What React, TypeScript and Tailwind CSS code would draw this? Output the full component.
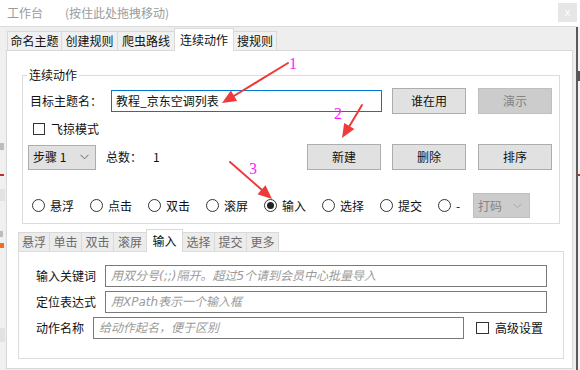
import React from "react";

function Chevron({ color = "#555" }: { color?: string }) {
  return (
    <svg width="9" height="6" viewBox="0 0 9 6" className="shrink-0">
      <polyline points="0.5,0.8 4.5,4.8 8.5,0.8" fill="none" stroke={color} strokeWidth="1" />
    </svg>
  );
}

function Btn({ label, disabled, className = "" }: { label: string; disabled?: boolean; className?: string }) {
  return (
    <div
      className={
        "w-[74px] h-[26px] flex items-center justify-center border " +
        (disabled ? "bg-[#cccccc] border-[#bfbfbf] text-[#838383] " : "bg-[#e1e1e1] border-[#adadad] text-[#111] ") +
        className
      }
    >
      {label}
    </div>
  );
}

function Radio({ label, checked, w = "w-[58px]" }: { label: string; checked?: boolean; w?: string }) {
  return (
    <div className={"flex items-center shrink-0 " + w}>
      <div className="w-[13px] h-[13px] rounded-full border border-[#333] bg-white flex items-center justify-center">
        {checked ? <div className="w-[7px] h-[7px] rounded-full bg-[#222]" /> : null}
      </div>
      <span className="ml-[5px]">{label}</span>
    </div>
  );
}

function Tab({ label, w, active, gray }: { label: string; w: string; active?: boolean; gray?: boolean }) {
  if (active) {
    return (
      <div
        className={
          "relative z-10 -mb-px h-[23px] bg-white border border-b-0 border-[#d9d9d9] flex items-center justify-center text-[#111] -ml-px " +
          w
        }
      >
        {label}
      </div>
    );
  }
  return (
    <div
      className={
        "h-[19px] border border-b-0 border-[#d9d9d9] flex items-center justify-center -ml-px first:ml-0 " +
        (gray ? "bg-[#ececec] text-[#6a6a6a] " : "bg-[#f0f0f0] text-[#111] ") +
        w
      }
    >
      {label}
    </div>
  );
}

const ph =
  "flex items-center pl-[5px] italic text-[#9b9b9b] font-['DejaVu_Sans','Noto_Sans_CJK_SC',sans-serif] text-[12px]";

export default function App() {
  return (
    <div className="w-[580px] h-[370px] overflow-hidden bg-white relative font-['Noto_Sans_CJK_SC','Microsoft_YaHei',sans-serif] text-[12px] leading-[16px] text-[#111]">
      {/* title bar */}
      <div className="h-[27px] w-[577px] flex items-center border-b border-[#dadada] bg-white">
        <span className="ml-[7px] text-[#9a9a9a]">工作台</span>
        <span className="ml-[22px] text-[#9a9a9a]">(按住此处拖拽移动)</span>
        <div className="ml-auto mb-[2px] w-[19px] h-[19px] bg-[#e6e6e6] flex items-center justify-center text-white text-[11px] font-['Liberation_Sans',sans-serif]">
          x
        </div>
      </div>

      <div className="flex h-[343px]">
        {/* left background strip */}
        <div className="w-[5px] bg-[#f0f0f0] flex flex-col">
          <div className="mt-[116px] w-[4px] h-[7px] bg-[#9a9a9a] opacity-60" />
          <div className="mt-[24px] w-[4px] h-[2px] bg-[#c0302a]" />
          <div className="mt-[13px] w-[5px] h-[12px] bg-[#e2e2e2]" />
          <div className="mt-[30px] w-[3px] h-[6px] bg-[#888] opacity-50" />
          <div className="mt-[6px] w-[4px] h-[5px] bg-[#f07020]" />
          <div className="mt-[80px] w-[5px] h-[14px] bg-[#e2e2e2]" />
        </div>

        {/* main window body */}
        <div className="w-[571px] bg-[#eeeeee] flex flex-col">
          {/* top tabs */}
          <div className="h-[23px] flex items-end ml-[2px]">
            <Tab label="命名主题" w="w-[55px]" />
            <Tab label="创建规则" w="w-[57px]" />
            <Tab label="爬虫路线" w="w-[58px]" />
            <Tab label="连续动作" w="w-[60px]" active />
            <Tab label="搜规则" w="w-[44px]" />
          </div>

          {/* panel */}
          <div className="ml-[1px] w-[567px] h-[319px] bg-white border border-[#d9d9d9] flex flex-col">
            <fieldset className="ml-[15px] mt-[16px] w-[538px] border border-[#dcdcdc] p-0 m-0">
              <legend className="ml-[4px] px-[2px] leading-[16px]">连续动作</legend>
              <div className="flex flex-col pt-[5px] pb-[5px] pr-[7px]">
                {/* row 1 */}
                <div className="flex items-center h-[26px] pl-[7px]">
                  <span className="w-[81px]">目标主题名：</span>
                  <div className="w-[271px] h-[22px] border border-[#0078d7] flex items-center pl-[4px]">
                    教程_京东空调列表
                  </div>
                  <Btn label="谁在用" className="ml-[10px]" />
                  <Btn label="演示" disabled className="ml-[12px]" />
                </div>
                {/* row 2 */}
                <div className="flex items-center h-[16px] mt-[7px] pl-[10px]">
                  <div className="w-[12px] h-[12px] border border-[#333] bg-white" />
                  <span className="ml-[6px]">飞掠模式</span>
                </div>
                {/* row 3 */}
                <div className="flex items-center h-[26px] mt-[7px] pl-[5px]">
                  <div className="w-[68px] h-[25px] bg-[#e1e1e1] border border-[#adadad] flex items-center pl-[4px] pr-[6px]">
                    <span>步骤 1</span>
                    <div className="ml-auto">
                      <Chevron color="#666" />
                    </div>
                  </div>
                  <span className="ml-[10px]">总数：</span>
                  <span className="ml-[11px]">1</span>
                  <Btn label="新建" className="ml-auto" />
                  <Btn label="删除" className="ml-[11px]" />
                  <Btn label="排序" className="ml-[12px]" />
                </div>
                {/* row 4 */}
                <div className="flex items-center h-[25px] mt-[23px] pl-[9px]">
                  <Radio label="悬浮" />
                  <Radio label="点击" />
                  <Radio label="双击" />
                  <Radio label="滚屏" />
                  <Radio label="输入" checked />
                  <Radio label="选择" />
                  <Radio label="提交" />
                  <Radio label="-" w="w-[35px]" />
                  <div className="w-[57px] h-[25px] bg-[#cccccc] border border-[#bfbfbf] flex items-center pl-[4px] pr-[7px] text-[#858585]">
                    <span>打码</span>
                    <div className="ml-auto">
                      <Chevron color="#a8a8a8" />
                    </div>
                  </div>
                </div>
              </div>
            </fieldset>

            {/* sub tabs */}
            <div className="ml-[11px] mt-[4px] h-[23px] flex items-end">
              <Tab label="悬浮" w="w-[32px]" gray />
              <Tab label="单击" w="w-[33px]" gray />
              <Tab label="双击" w="w-[33px]" gray />
              <Tab label="滚屏" w="w-[34px]" gray />
              <Tab label="输入" w="w-[37px]" active />
              <Tab label="选择" w="w-[33px]" gray />
              <Tab label="提交" w="w-[33px]" gray />
              <Tab label="更多" w="w-[33px]" gray />
            </div>

            {/* inner panel */}
            <div className="ml-[11px] w-[546px] h-[108px] border border-[#dcdcdc] flex flex-col pt-[13px] pl-[17px]">
              <div className="flex items-center h-[22px]">
                <span className="w-[69px]">输入关键词</span>
                <div className={"w-[442px] h-[22px] border border-[#7a7a7a] " + ph}>
                  用双分号(;;)隔开。超过5个请到会员中心批量导入
                </div>
              </div>
              <div className="flex items-center h-[22px] mt-[4px]">
                <span className="w-[69px]">定位表达式</span>
                <div className={"w-[442px] h-[22px] border border-[#7a7a7a] " + ph}>用XPath表示一个输入框</div>
              </div>
              <div className="flex items-center h-[22px] mt-[4px]">
                <span className="w-[57px]">动作名称</span>
                <div className={"w-[371px] h-[22px] border border-[#7a7a7a] " + ph}>给动作起名，便于区别</div>
                <div className="ml-[12px] w-[13px] h-[12px] border border-[#333] bg-white" />
                <span className="ml-[6px]">高级设置</span>
              </div>
            </div>
          </div>
        </div>

        {/* right background strip */}
        <div className="w-[2px] bg-[#5a5a5a]" />
        <div className="w-[2px] bg-[#f3f3f3] flex flex-col">
          <div className="mt-[44px] w-[2px] h-[10px] bg-[#555]" />
          <div className="mt-[93px] w-[2px] h-[2px] bg-[#c0302a]" />
        </div>
      </div>

      {/* annotations */}
      <svg className="absolute left-0 top-0 pointer-events-none" width="580" height="370" viewBox="0 0 580 370">
        <g stroke="#f03a3a" strokeWidth="2" strokeLinecap="round" fill="#f03a3a">
          <line x1="288" y1="63" x2="233" y2="96.5" />
          <polygon points="222,103 237.1,100.9 230.9,90.6" stroke="none" />
          <line x1="362" y1="105" x2="349.5" y2="126" />
          <polygon points="342,138 354.4,129.1 344.2,122.9" stroke="none" />
          <line x1="230" y1="162" x2="262" y2="190" />
          <polygon points="272,199 265.5,185.25 257.5,194.25" stroke="none" />
        </g>
        <g fill="#ff1aff" fontFamily="'Liberation Serif', serif" fontSize="16">
          <text x="289" y="68.5">1</text>
          <text x="334" y="118.5">2</text>
          <text x="249" y="173.5">3</text>
        </g>
      </svg>
    </div>
  );
}
